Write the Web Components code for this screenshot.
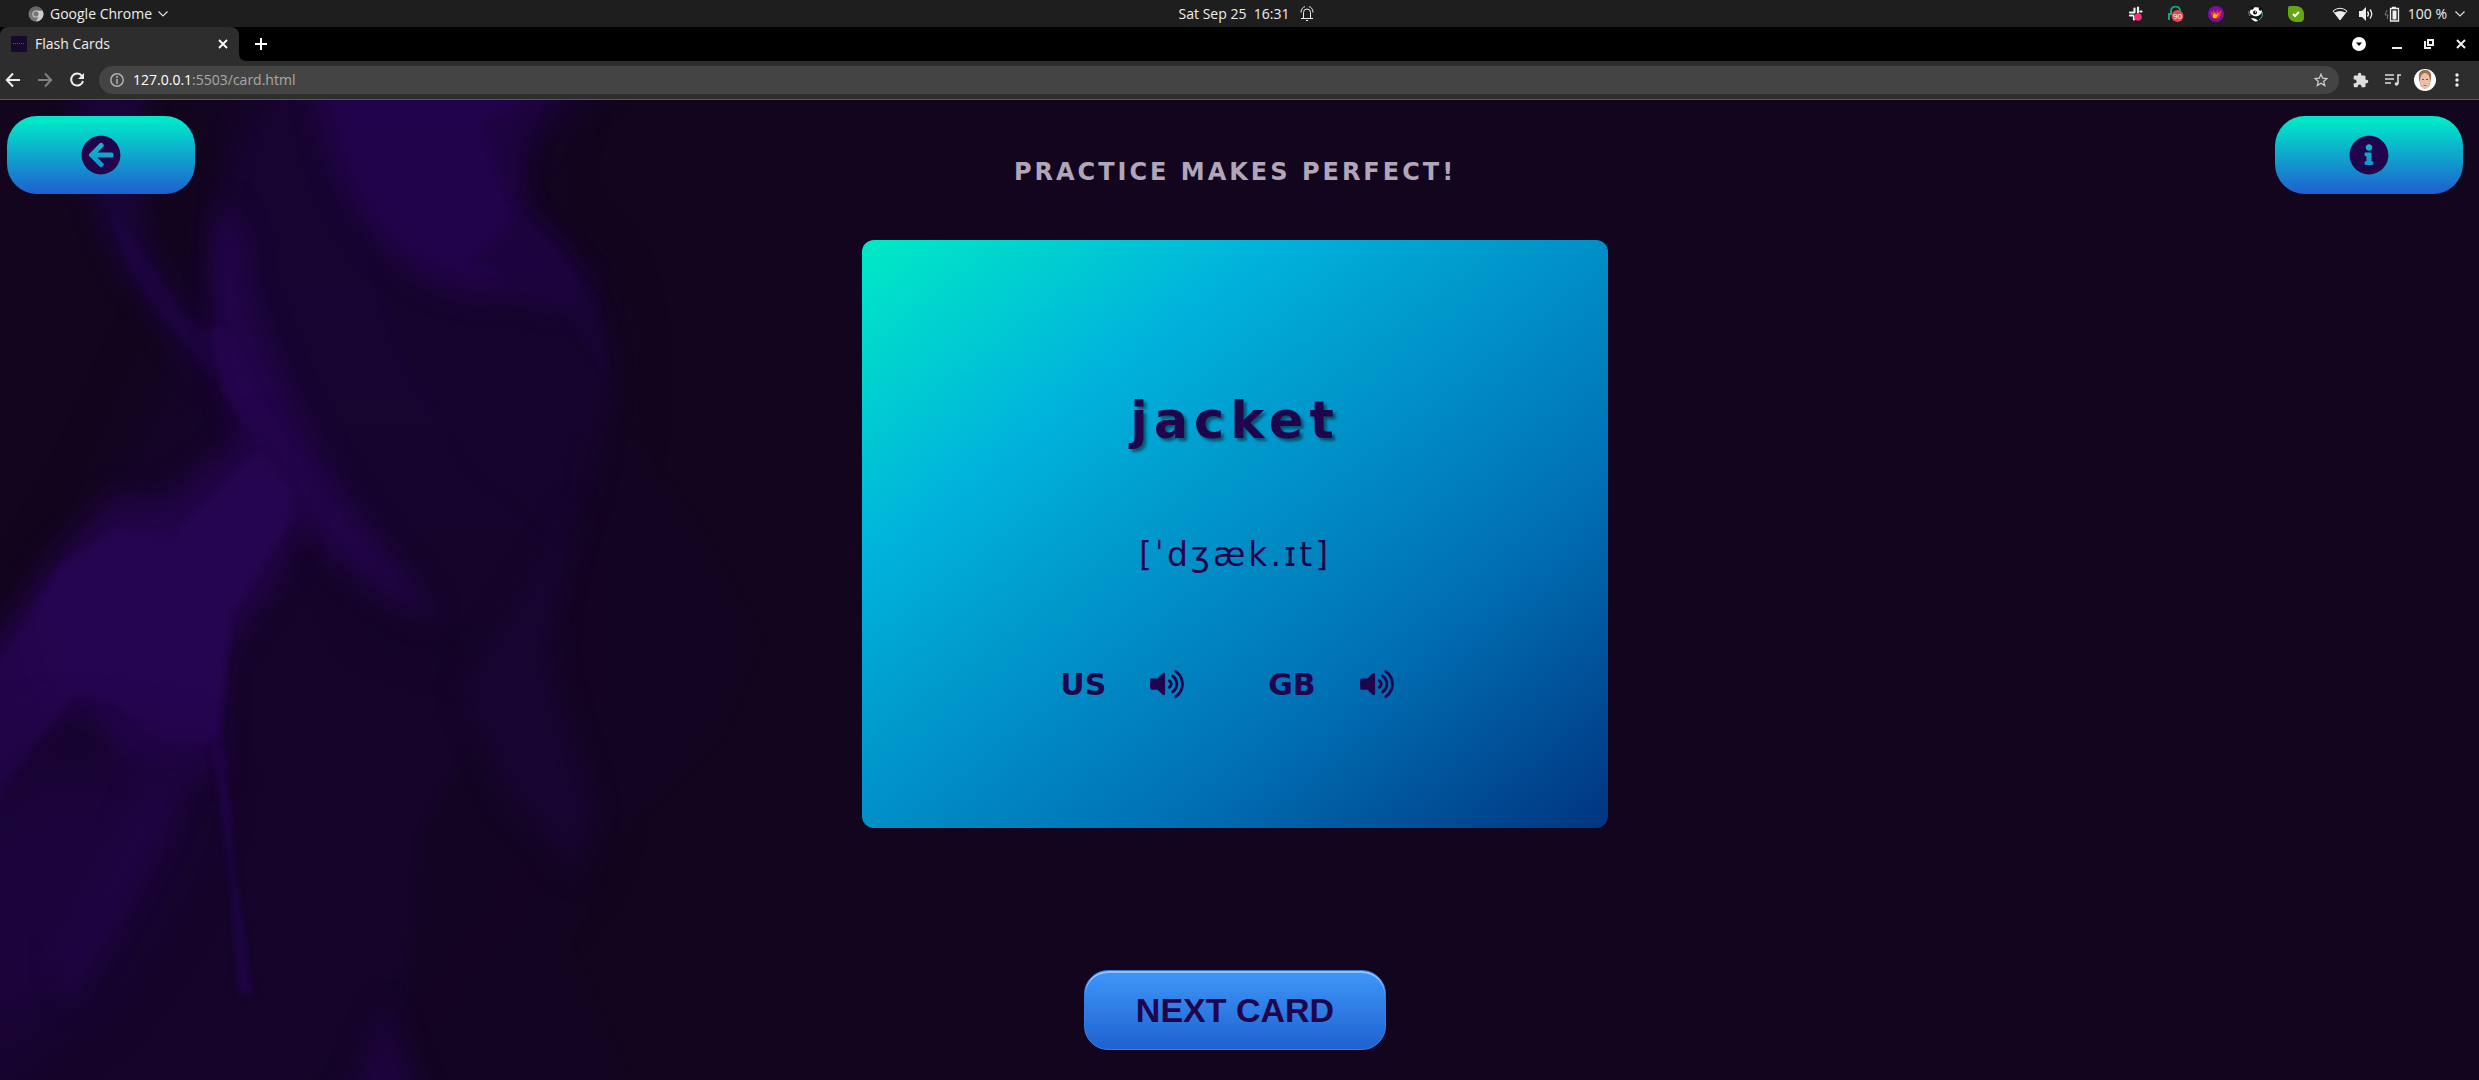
<!DOCTYPE html>
<html lang="en">
<head>
<meta charset="utf-8">
<title>Flash Cards</title>
<style>
html,body{margin:0;height:100%;background:#13051e}
body{display:flex;flex-direction:column;overflow:hidden}
</style>
</head>
<body>
<system-bar></system-bar>
<browser-tabs></browser-tabs>
<browser-toolbar></browser-toolbar>
<flash-app></flash-app>
<script>
const define = (name, css, html) => {
  customElements.define(name, class extends HTMLElement {
    constructor() {
      super();
      this.attachShadow({ mode: 'open' }).innerHTML = `<style>:host,*{box-sizing:border-box}svg{display:block;flex:none}button{font:inherit;color:inherit;background:none;border:0;padding:0;margin:0;cursor:pointer;display:flex;align-items:center}${css}</style>${html}`;
    }
  });
};

define('system-bar', `
:host{display:grid;grid-template-columns:1fr auto 1fr;align-items:center;height:27px;flex:none;background:#1e1e1e;color:#eee;font:14px/26px "Open Sans","Noto Sans",sans-serif;padding:0 14px 0 28px}
.left,.mid,.right{display:flex;align-items:center}
.left button{gap:6px}
.mid{gap:11px;white-space:pre}
.right{justify-content:flex-end}
.tray{display:flex;gap:24px;margin-right:28px}
.status{gap:8px}
`, `
<div class="left"><button>
<svg width="16" height="16" viewBox="0 0 16 16"><circle cx="8" cy="8" r="7.5" fill="#777"/><path d="M8 4.5h6.6A7.5 7.5 0 0 1 8 15.5l3-5.5z" fill="#ccc"/><path d="M1.5 4.2A7.5 7.5 0 0 1 14.6 4.5H8L5 9.5z" fill="#666"/><circle cx="8" cy="8" r="3.6" fill="#ddd"/><circle cx="8" cy="8" r="2.7" fill="#777"/></svg>
<span>Google Chrome</span>
<svg width="10" height="6" viewBox="0 0 10 6" fill="none" stroke="#ddd" stroke-width="1.2"><path d="M.5 .5 5 5 9.5 .5"/></svg>
</button></div>
<div class="mid"><span>Sat Sep 25  16:31</span>
<svg width="14" height="16" viewBox="0 0 14 16" fill="none" stroke="#eee"><path d="M3.5 12V6.5a3.5 3.5 0 0 1 7 0V12M1 12.5h12M6 14.5h2M1 6.500C1 3 3 1 5 .7M13 6.500C13 3 11 1 9 .7"/></svg></div>
<div class="right">
<div class="tray">
<svg width="16" height="16" viewBox="0 0 16 16"><g stroke="#eee" stroke-width="2.200" stroke-linecap="round" fill="none"><path d="M6.500 2.500v3M2 6.500h4.500M10 1.500v5M12.500 5.500h1M2 9.500h3M6 10.500v3"/></g><circle cx="10" cy="11" r="3.800" fill="#f0307c"/></svg>
<svg width="16" height="16" viewBox="0 0 16 16"><path d="M1 14V8h2V5a4.500 4.500 0 0 1 9 0v2" fill="none" stroke="#17a085" stroke-width="2"/><circle cx="9.500" cy="10" r="6" fill="#e8474c"/><text x="9.500" y="13" font-size="8" font-family="Open Sans" fill="#fff" text-anchor="middle">90</text></svg>
<svg width="16" height="16" viewBox="0 0 16 16"><circle cx="8" cy="8" r="8" fill="#7d0fa8"/><path d="M2.500 5l2.500 2V4l3 3 2-4 .5 4L13.500 4c0 6-3 9-6 9C4 12 3 9 2.500 5z" fill="#f43a1c"/><path d="M5 9l2-2 1 2 3-2-3 5H5z" fill="#ffc21a"/></svg>
<svg width="16" height="16" viewBox="0 0 16 16"><circle cx="8" cy="8" r="7" fill="#101810"/><path d="M2 6c0-5 10-7 12-1 0 4-5 6-8 5-1-1-4-1-4-4z" fill="#fff"/><circle cx="7" cy="6.500" r="2" fill="#111"/><circle cx="7.500" cy="6" r=".7" fill="#fff"/><circle cx="4" cy="2" r="1.800" fill="#111"/><circle cx="12.500" cy="3" r="1.800" fill="#111"/><path d="M3 12c3 0 6 1 7 3-3 1-5 0-7-3z" fill="#fff"/><path d="M14 6c1 3 0 6-3 8M1 5q-.5 3 1 5" stroke="#5db58a" fill="none"/></svg>
<svg width="16" height="16" viewBox="0 0 16 16"><path d="M0 2q0-2 2-2h6c5 0 8 4 8 8v5q-1 3-4 3H8C3 16 0 12 0 8z" fill="#63a80f"/><path d="M5 8l2 2 4-4" stroke="#fff" stroke-width="2" fill="none"/></svg>
</div>
<button class="status" aria-label="System status">
<svg width="16" height="14" viewBox="0 0 16 14"><path d="M1 4Q8-1.500 15 4L8 13z" fill="none" stroke="#eee"/><path d="M2.500 5.500Q8 2.500 13.500 5.500L8 13z" fill="#eee"/></svg>
<svg width="20" height="14" viewBox="-3 0 20 14"><path d="M0 4H3L7 0v14L3 10H0z" fill="#eee"/><path d="M8.500 4.500q2 2.500 0 5M11 2.500q3.500 4.500 0 9" fill="none" stroke="#eee" stroke-width="1.300"/></svg>
<svg width="16" height="16" viewBox="0 0 16 16"><path d="M3 4 1 9h3l-1 4" fill="none" stroke="#777"/><path d="M8 1.500h4M6.500 2.500h8v12.500h-8z" fill="none" stroke="#eee" stroke-width="1.300"/><path d="M8.500 4.500h4v9h-4z" fill="#eee"/></svg>
<span>100 %</span>
<svg width="10" height="6" viewBox="0 0 10 6" fill="none" stroke="#ddd" stroke-width="1.200"><path d="M.5 .5 5 5 9.500 .5"/></svg>
</button></div>`);

define('browser-tabs', `
:host{display:flex;height:34px;flex:none;background:#000;color:#eee;font:14px/34px "Open Sans","Noto Sans",sans-serif;justify-content:space-between;padding-right:13px}
.strip,.win,.tab{display:flex;align-items:center}
.tab{width:239px;height:34px;background:#2d2d2d;border-radius:8px 8px 0 0;padding:0 11px;gap:8px}
.tab span{flex:1}
.curve{align-self:flex-end}
.new{margin-left:8px}
.win button{width:32px;height:34px;justify-content:center}
.win{margin-right:-11px}
.win .search{width:44px}
`, `
<div class="strip"><div class="tab">
<svg width="16" height="16"><path d="M0 0h16v16H0z" fill="#180a2c"/><path d="M2 7.500h12" stroke="#5d5168" stroke-dasharray="1 1"/></svg>
<span>Flash Cards</span>
<button aria-label="Close tab"><svg width="10" height="10" viewBox="0 0 10 10" stroke="#fff" stroke-width="1.800"><path d="M1 1l8 8M9 1 1 9"/></svg></button></div>
<svg class="curve" width="8" height="8"><path d="M0 0q0 8 8 8H0z" fill="#2d2d2d"/></svg>
<button class="new" aria-label="New tab"><svg width="12" height="12" stroke="#fff" stroke-width="2"><path d="M6 0v12M0 6h12"/></svg></button></div>
<div class="win">
<button class="search" aria-label="Search tabs"><svg width="14" height="14"><circle cx="7" cy="7" r="7" fill="#fff"/><path d="M4 5.500h6L7 9z" fill="#000"/></svg></button>
<button aria-label="Minimize"><svg width="10" height="10"><path d="M0 9h10" stroke="#eee" stroke-width="2"/></svg></button>
<button aria-label="Restore"><svg width="10" height="10" fill="none" stroke="#eee" stroke-width="2"><path d="M4 1h5v5H4zM1 2v7h6"/></svg></button>
<button aria-label="Close"><svg width="10" height="10" stroke="#eee" stroke-width="2"><path d="M1 1l8 8M9 1 1 9"/></svg></button></div>`);

define('browser-toolbar', `
:host{display:flex;align-items:center;height:39px;flex:none;background:#2d2d2d;border-bottom:1px solid #5a5a5a;padding:0 6px 0 5px;color:#eee;font:14px/28px "Open Sans","Noto Sans",sans-serif}
.nav{display:flex;gap:16px}
.omni{flex:1;display:flex;align-items:center;height:28px;border-radius:14px;background:#444;padding:0 11px;gap:9px;margin:0 6px 0 14px}
.actions{display:flex}
.actions button{width:32px;justify-content:center}
.url{flex:1;color:#a9a9a9}
.url b{font-weight:400;color:#fff}
`, `
<div class="nav">
<button aria-label="Back"><svg width="16" height="16" viewBox="0 0 16 16" fill="none" stroke="#eee" stroke-width="2"><path d="M15 8H2M8 1.500 1.800 8 8 14.500"/></svg></button>
<button aria-label="Forward"><svg width="16" height="16" viewBox="0 0 16 16" fill="none" stroke="#808080" stroke-width="2"><path d="M1 8h13M8 1.500 14.200 8 8 14.500"/></svg></button>
<button aria-label="Reload"><svg width="16" height="16" viewBox="0 0 16 16" fill="none" stroke="#eee" stroke-width="2"><path d="M13 4A6 6 0 1 0 14 9"/><path d="M15 1v6H9z" fill="#eee" stroke="none"/></svg></button></div>
<div class="omni">
<svg width="14" height="14" fill="none" stroke="#b0b0b0" stroke-width="1.500"><circle cx="7" cy="7" r="6.200"/><path d="M7 6v5M7 3v2"/></svg>
<span class="url"><b>127.0.0.1</b>:5503/card.html</span>
<button aria-label="Bookmark this tab"><svg width="14" height="14" viewBox="0 0 14 14" fill="none" stroke="#ccc" stroke-width="1.300"><path d="M7 1.200 8.700 5.200 13 5.500 9.700 8.300 10.700 12.600 7 10.300 3.300 12.600 4.300 8.300 1 5.500 5.300 5.200z"/></svg></button></div>
<div class="actions">
<button aria-label="Extensions"><svg width="16" height="16" viewBox="1 0 23 23" fill="#ddd"><path d="M20.500 11H19V7c0-1.100-.9-2-2-2h-4V3.500a2.500 2.500 0 0 0-5 0V5H4c-1.100 0-2 .9-2 2v3.800h1.500a2.700 2.700 0 0 1 0 5.400H2V20c0 1.100.9 2 2 2h3.800v-1.500a2.700 2.700 0 0 1 5.400 0V22H17c1.100 0 2-.9 2-2v-4h1.500a2.500 2.500 0 0 0 0-5z"/></svg></button>
<button aria-label="Media"><svg width="16" height="14" viewBox="0 0 16 14" fill="none" stroke="#ddd" stroke-width="1.600"><path d="M0 2h9M0 6h9M0 10h6M13 11V2h3"/><circle cx="11.500" cy="11" r="1.800" fill="#ddd" stroke="none"/></svg></button>
<button aria-label="Profile"><svg width="22" height="22" viewBox="0 0 22 22"><circle cx="11" cy="11" r="11" fill="#fff"/><path d="M5 10C4 3 7 1 11 1s7 2 6 9l-2 8H7z" fill="#9a7050"/><ellipse cx="11" cy="12" rx="5" ry="8" fill="#e8bfa8"/><path d="M8 10.500h2M12 10.500h2" stroke="#705040"/><path d="M9.500 16.500h3" stroke="#c06060"/></svg></button>
<button aria-label="Menu"><svg width="10" height="14" fill="#eee"><circle cx="5" cy="2" r="1.700"/><circle cx="5" cy="7" r="1.700"/><circle cx="5" cy="12" r="1.700"/></svg></button>
</div>`);

define('smoke-backdrop', `
:host{display:block;overflow:hidden}
svg{width:800px;height:980px;color-interpolation-filters:sRGB}
`, `
<svg viewBox="0 0 800 800" preserveAspectRatio="none" aria-hidden="true">
<defs>
<filter id="s" x="-30%" y="-30%" width="160%" height="160%"><feGaussianBlur stdDeviation="3"/></filter>
<filter id="m" x="-60%" y="-60%" width="220%" height="220%"><feGaussianBlur stdDeviation="12"/></filter>
<filter id="l" x="-60%" y="-60%" width="220%" height="220%"><feGaussianBlur stdDeviation="28"/></filter>
<linearGradient id="veil" x1="0" y1="0" x2="0" y2="1"><stop offset="0" stop-color="#1a0437"/><stop offset=".4" stop-color="#19053a"/><stop offset="1" stop-color="#150426"/></linearGradient>
<radialGradient id="mass" gradientUnits="userSpaceOnUse" cx="180" cy="400" r="210"><stop offset=".6" stop-color="#25054f"/><stop offset="1" stop-color="#220449"/></radialGradient>
</defs>
<path d="M-60 570 110 330 210 150 240-60H560L520 90 600 170 610 235 590 330 600 420 580 600 480 700 330 860H-60z" fill="#16042a" filter="url(#l)"/>
<path d="M610 250 700 350 760 440 720 520 620 600 570 690 660 860H400L420 600 540 430z" fill="#140522" filter="url(#s)" opacity=".8"/>
<path d="M225 50Q260-20 320-20H620L525 50 518 90 560 125 598 165 611 235 590 320 540 430 470 470 360 440 290 330 215 200z" fill="url(#veil)" filter="url(#m)" opacity=".5"/>
<path d="M340 40 518 90 560 125 598 165 611 235 590 320 560 360 470 300 400 200z" fill="#17042c" filter="url(#s)" opacity=".7"/>
<path d="M310-50H570L545 0 515 40 518 90Q560 120 590 160 560 170 520 155 440 165 380 115 320 60 310-50z" fill="#21034b" filter="url(#m)"/>
<path d="M470 130 520 95 560 125 598 165 608 225 560 170z" fill="#1a0439" filter="url(#s)" opacity=".6"/>
<path d="M480 20Q530 0 550-20L575-30 535 15 518 60 510 80z" fill="#1b0439" filter="url(#s)" opacity=".5"/>
<path d="M75-20H150Q120 90 170 150L205 195 210 235 150 170Q80 100 75-20z" fill="#1c0440" filter="url(#m)" opacity=".8"/>
<path d="M110 90Q120 100 140 120L180 170 208 190 215 230 150 165Q120 130 110 90z" fill="#20044a" filter="url(#s)" opacity=".5"/>
<path d="M215 90Q245 80 250 160 300 270 350 330L440 425Q340 390 290 330L240 270Q200 190 215 90z" fill="#210449" filter="url(#m)"/>
<path d="M208 190Q225 170 245 220L310 315 298 325 255 275 225 240z" fill="#25054f" filter="url(#s)" opacity=".8"/>
<path d="M-30 470 50 380 110 325 170 325 258 265 310 320 280 390 225 450 220 545 130 550 85 495 40 520-30 590z" fill="#210448" filter="url(#m)"/>
<path d="M-20 485 60 380 115 350 170 355 240 300 262 286 292 316 290 345 232 420 218 525 165 525 110 490 75 485 40 520-20 590z" fill="url(#mass)" filter="url(#s)"/>
<path d="M-40 580 50 530 200 550 160 640 90 720-40 800z" fill="#1b043b" filter="url(#l)"/>
<path d="M150 550 205 535 110 680 70 740 50 700z" fill="#200446" filter="url(#m)" opacity=".7"/>
<path d="M212 525 225 530 234 620 252 730 238 730 232 650z" fill="#20044a" filter="url(#s)" opacity=".8"/>
<path d="M580 330Q555 400 550 460L595 580 575 630 500 560 460 480z" fill="#180531" filter="url(#m)"/>
<path d="M340 830 385 740 430 830z" fill="#1c043d" filter="url(#m)"/>
</svg>`);

define('pill-button', `
:host{display:block}
button{justify-content:center;width:188px;height:78px;border-radius:30px;background:linear-gradient(#00e8c9 5%,#1f5fd0);color:#21054c}
`, `<button><slot></slot></button>`);

define('next-button', `
:host{display:block}
button{justify-content:center;height:80px;padding:0 51px;border:1px solid #337fed;border-radius:24px;background:linear-gradient(#3d94f6 5%,#1e62d0);box-shadow:inset 0 2px 0 #97c4fe;color:#21054c;font:bold 34px/40px "Liberation Sans",Arial,sans-serif}
`, `<button><slot></slot></button>`);

define('audio-control', `
:host{display:flex;align-items:center;gap:44px}
span{line-height:36px}
button{height:36px;padding-bottom:3px}
`, `<span><slot></slot></span><button aria-label="Listen"><svg width="34" height="30" viewBox="0 0 576 512" fill="currentColor"><path d="M215.030 71.050L126.060 160H24c-13.260 0-24 10.740-24 24v144c0 13.250 10.740 24 24 24h102.060l88.970 88.950c15.030 15.030 40.970 4.470 40.970-16.970V88.020c0-21.460-25.960-31.980-40.970-16.970zm233.320-51.080c-11.170-7.330-26.180-4.240-33.510 6.950-7.340 11.170-4.220 26.180 6.950 33.510 66.270 43.490 105.820 116.600 105.820 195.580 0 78.980-39.550 152.090-105.820 195.580-11.170 7.320-14.290 22.340-6.950 33.500 7.040 10.710 21.930 14.560 33.510 6.950C528.270 439.580 576 351.330 576 256S528.270 72.430 448.350 19.970zM480 256c0-63.530-32.060-121.940-85.770-156.240-11.190-7.140-26.030-3.820-33.120 7.460s-3.780 26.210 7.410 33.360C408.270 165.970 432 209.110 432 256s-23.730 90.020-63.480 115.420c-11.190 7.140-14.500 22.070-7.410 33.360 6.510 10.360 21.120 15.140 33.120 7.460C447.940 377.940 480 319.540 480 256zm-141.770-76.870c-11.580-6.330-26.190-2.160-32.610 9.450-6.390 11.610-2.160 26.200 9.450 32.610C327.980 228.280 336 241.630 336 256c0 14.380-8.020 27.720-20.920 34.810-11.610 6.410-15.840 21-9.450 32.610 6.430 11.660 21.050 15.800 32.610 9.450 28.230-15.550 45.770-45 45.770-76.880s-17.540-61.320-45.780-76.860z"/></svg></button>`);

define('word-card', `
:host{display:flex;flex-direction:column;align-items:center;width:746px;padding:151px 0 125px;border-radius:12px;background:linear-gradient(to bottom right,#00eac6,#00b2dc 28%,#0070b4 70%,#003580);color:#21054c;font-family:"DejaVu Sans",sans-serif}
h2{margin:0 0 84px;font-size:51px;line-height:60px;letter-spacing:6px;text-shadow:3px 3px 3px rgba(0,0,0,.45)}
p{margin:0 0 92px;font-size:33px;line-height:40px;letter-spacing:3px}
.audio{display:flex;gap:84px;padding-right:16px;font-size:30px;font-weight:bold}
`, `<h2><slot name="word"></slot></h2><p><slot name="ipa"></slot></p><div class="audio"><slot></slot></div>`);

define('flash-app', `
:host{flex:1;display:grid;min-height:0;background:#13051e;overflow:hidden}
smoke-backdrop,main{grid-area:1/1;min-height:0}
main{display:flex;flex-direction:column;align-items:center;padding:16px 16px 30px 7px;z-index:1}
header{display:flex;justify-content:space-between;align-self:stretch;height:124px}
h1{margin:40px 0 0;font:bold 24px/32px "DejaVu Sans",sans-serif;letter-spacing:3px;color:#b1a5ba}
next-button{margin-top:auto}
`, `
<smoke-backdrop></smoke-backdrop>
<main>
<header>
<pill-button><svg role="img" aria-label="Back" width="40" height="40" viewBox="0 0 512 512" fill="currentColor"><path d="M256 504C119 504 8 393 8 256S119 8 256 8s248 111 248 248-111 248-248 248zm28.900-143.600L209.400 288H392c13.300 0 24-10.700 24-24v-16c0-13.300-10.700-24-24-24H209.400l75.500-72.400c9.700-9.300 9.900-24.800.4-34.300l-11-10.900c-9.400-9.400-24.600-9.400-33.900 0L107.700 239c-9.400 9.400-9.400 24.600 0 33.900l132.700 132.700c9.400 9.400 24.600 9.400 33.900 0l11-10.900c9.500-9.500 9.300-25-.4-34.300z"/></svg></pill-button>
<h1>PRACTICE MAKES PERFECT!</h1>
<pill-button><svg role="img" aria-label="Information" width="40" height="40" viewBox="0 0 512 512" fill="currentColor"><path d="M256 8C119.043 8 8 119.083 8 256c0 136.997 111.043 248 248 248s248-111.003 248-248C504 119.083 392.957 8 256 8zm0 110c23.196 0 42 18.804 42 42s-18.804 42-42 42-42-18.804-42-42 18.804-42 42-42zm56 254c0 6.627-5.373 12-12 12h-88c-6.627 0-12-5.373-12-12v-24c0-6.627 5.373-12 12-12h12v-64h-12c-6.627 0-12-5.373-12-12v-24c0-6.627 5.373-12 12-12h64c6.627 0 12 5.373 12 12v100h12c6.627 0 12 5.373 12 12v24z"/></svg></pill-button>
</header>
<word-card><span slot="word">jacket</span><span slot="ipa">[ˈdʒæk.ɪt]</span><audio-control>US</audio-control><audio-control>GB</audio-control></word-card>
<next-button>NEXT CARD</next-button>
</main>`);
</script>
</body>
</html>
